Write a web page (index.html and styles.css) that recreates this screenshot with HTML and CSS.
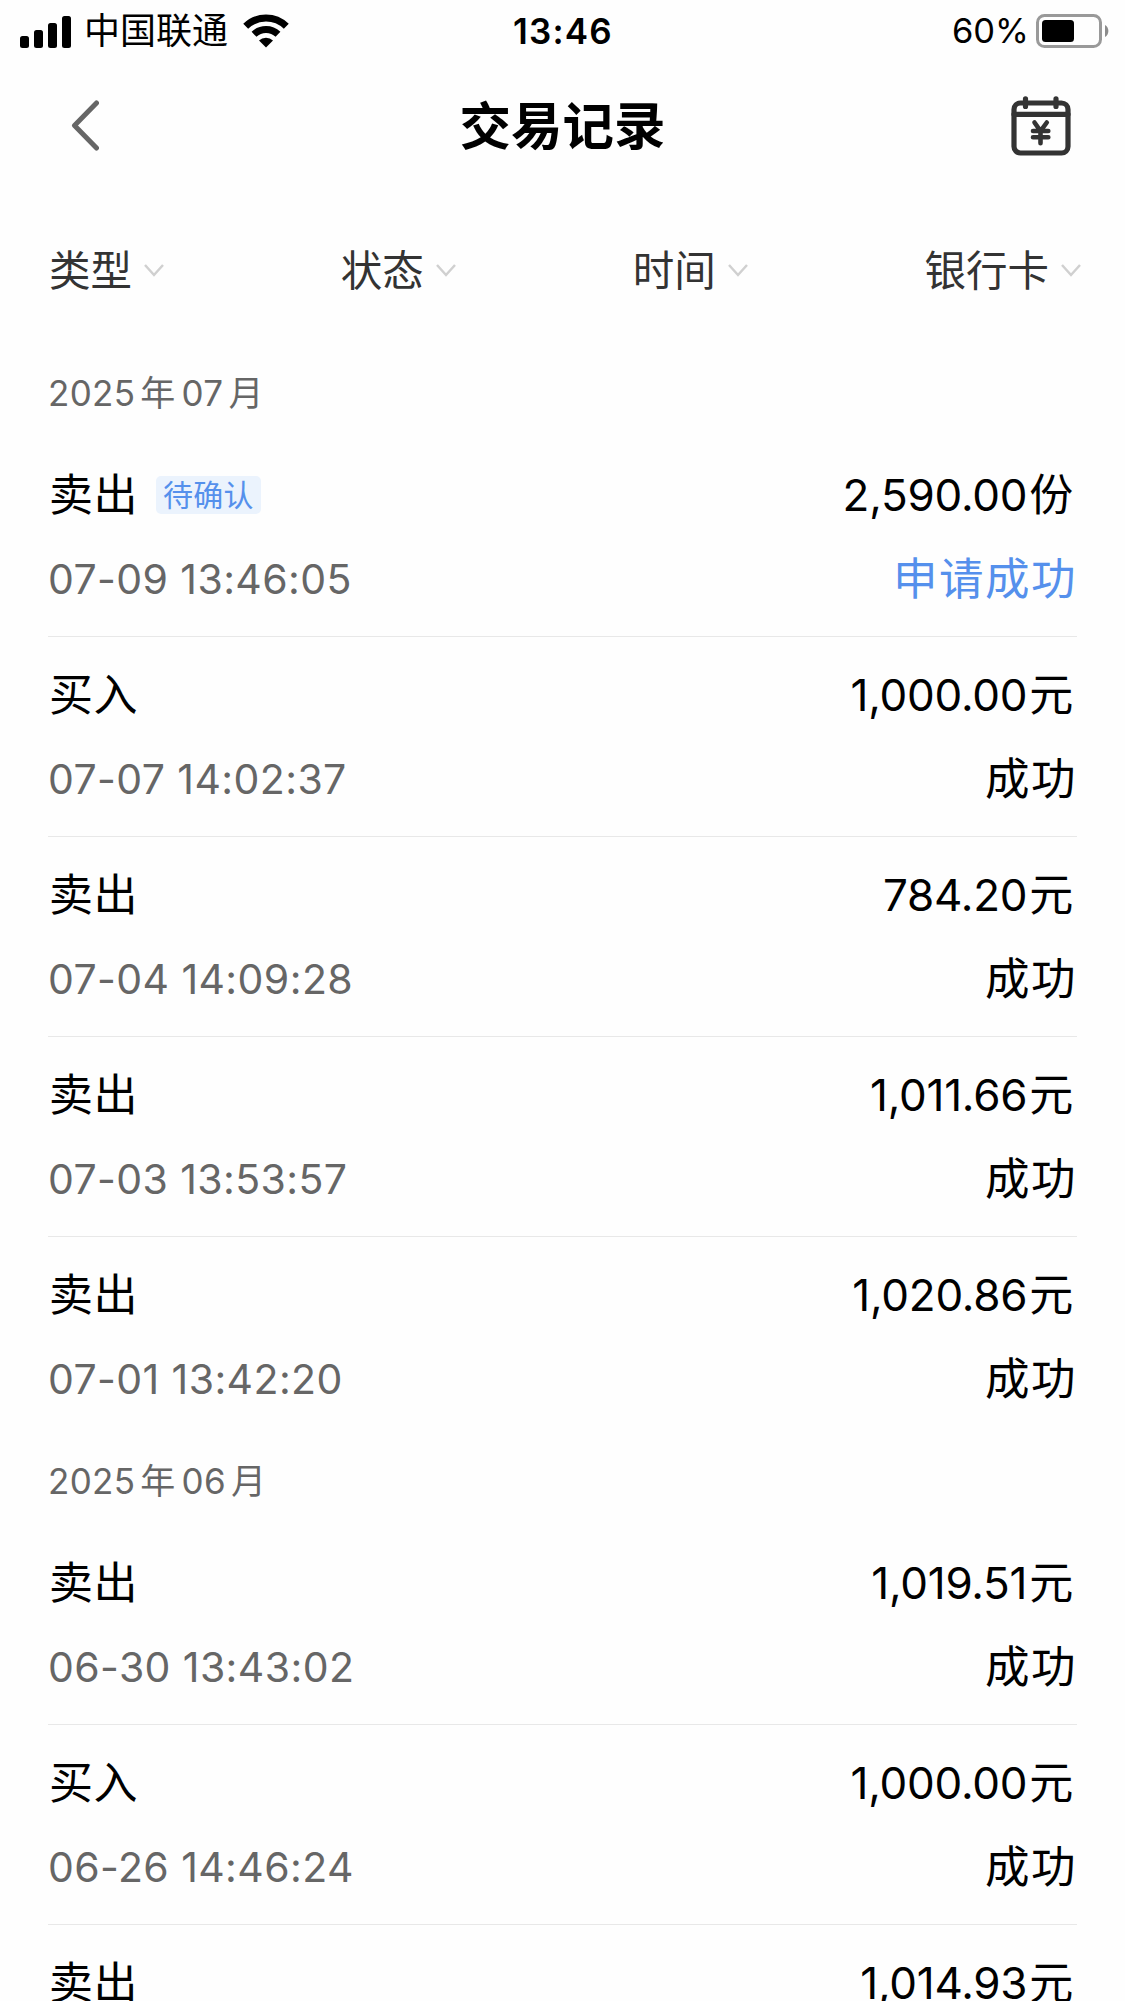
FILE: index.html
```html
<!DOCTYPE html>
<html lang="zh-CN">
<head>
    <meta charset="UTF-8">
    <title>交易记录</title>
    <link rel="stylesheet" href="styles.css">
</head>
<body>
    <div class="statusbar">
        <div class="status-left">
            <svg class="signal" width="52" height="33" viewBox="0 0 52 33">
                <rect x="0" y="21" width="9" height="12" rx="2.5"/>
                <rect x="14" y="15" width="9" height="18" rx="2.5"/>
                <rect x="28" y="8" width="9" height="25" rx="2.5"/>
                <rect x="42" y="1" width="9" height="32" rx="2.5"/>
            </svg>
            <span class="carrier">中国联通</span>
            <svg class="wifi" width="46" height="34" viewBox="0 0 46 34">
                <path d="M2.7 12.3 A29 29 0 0 1 43.3 12.3" fill="none" stroke="#000" stroke-width="7"/>
                <path d="M11 20.3 A17.5 17.5 0 0 1 35 20.3" fill="none" stroke="#000" stroke-width="7"/>
                <path d="M16 26.5 A10 10 0 0 1 30 26.5 L23 33.5 Z"/>
            </svg>
        </div>
        <span class="clock">13:46</span>
        <div class="status-right">
            <span class="percent">60%</span>
            <svg class="battery" width="74" height="34" viewBox="0 0 74 34">
                <rect x="1.5" y="1.5" width="63" height="31" rx="7" fill="none" stroke="#999" stroke-width="3"/>
                <rect x="6" y="6" width="32" height="22" rx="3.5"/>
                <path d="M69 11 A7 7 0 0 1 69 23 Z" fill="#8c8c8c"/>
            </svg>
        </div>
    </div>

    <div class="navbar">
        <svg class="back" width="28" height="52" viewBox="0 0 28 52">
            <path d="M25.5 3 L3.5 25.5 L25.5 48" fill="none" stroke="#666" stroke-width="5" stroke-linecap="round" stroke-linejoin="round"/>
        </svg>
        <h1>交易记录</h1>
        <svg class="calendar" width="60" height="60" viewBox="0 0 60 60">
            <g fill="none" stroke="#333" stroke-width="5.2" stroke-linecap="round">
                <rect x="3" y="7" width="54" height="50" rx="6.5"/>
                <path d="M3 18.3 H57 M14.5 2.8 V10.5 M45 2.8 V10.5"/>
                <path d="M23.5 26.5 L29.5 35 L35.8 26.5 M29.5 35 V47.3 M22 35 H37.3 M22 41.3 H37.3" stroke-width="4.6"/>
            </g>
        </svg>
    </div>

    <div class="filters">
        <div class="filter">类型<svg class="arrow" width="20" height="13" viewBox="0 0 20 13"><path d="M1 1 L10 11 L19 1"/></svg></div>
        <div class="filter">状态<svg class="arrow" width="20" height="13" viewBox="0 0 20 13"><path d="M1 1 L10 11 L19 1"/></svg></div>
        <div class="filter">时间<svg class="arrow" width="20" height="13" viewBox="0 0 20 13"><path d="M1 1 L10 11 L19 1"/></svg></div>
        <div class="filter">银行卡<svg class="arrow" width="20" height="13" viewBox="0 0 20 13"><path d="M1 1 L10 11 L19 1"/></svg></div>
    </div>

    <div class="records">
        <h2 class="month">2025<i>年</i>07<i>月</i></h2>
        <div class="record">
            <div class="line"><span class="type">卖出<span class="tag">待确认</span></span><span class="amount">2,590.00<i>份</i></span></div>
            <div class="line"><span class="time">07-09 13:46:05</span><span class="state pending">申请成功</span></div>
        </div>
        <div class="record">
            <div class="line"><span class="type">买入</span><span class="amount">1,000.00<i>元</i></span></div>
            <div class="line"><span class="time">07-07 14:02:37</span><span class="state">成功</span></div>
        </div>
        <div class="record">
            <div class="line"><span class="type">卖出</span><span class="amount">784.20<i>元</i></span></div>
            <div class="line"><span class="time">07-04 14:09:28</span><span class="state">成功</span></div>
        </div>
        <div class="record">
            <div class="line"><span class="type">卖出</span><span class="amount">1,011.66<i>元</i></span></div>
            <div class="line"><span class="time">07-03 13:53:57</span><span class="state">成功</span></div>
        </div>
        <div class="record last">
            <div class="line"><span class="type">卖出</span><span class="amount">1,020.86<i>元</i></span></div>
            <div class="line"><span class="time">07-01 13:42:20</span><span class="state">成功</span></div>
        </div>

        <h2 class="month">2025<i>年</i>06<i>月</i></h2>
        <div class="record">
            <div class="line"><span class="type">卖出</span><span class="amount">1,019.51<i>元</i></span></div>
            <div class="line"><span class="time">06-30 13:43:02</span><span class="state">成功</span></div>
        </div>
        <div class="record">
            <div class="line"><span class="type">买入</span><span class="amount">1,000.00<i>元</i></span></div>
            <div class="line"><span class="time">06-26 14:46:24</span><span class="state">成功</span></div>
        </div>
        <div class="record">
            <div class="line"><span class="type">卖出</span><span class="amount">1,014.93<i>元</i></span></div>
        </div>
    </div>
</body>
</html>
```
FILE: styles.css
```css
* { box-sizing: border-box; }
body { margin: 0; height: 2001px; overflow: hidden; background-color: #fefefe; color: #000; font-family: Inter, "Noto Sans CJK SC", sans-serif; }
h1, h2 { margin: 0; }
i { font-style: normal; }
svg { display: block; flex: none; }

.statusbar { display: grid; grid-template-columns: 1fr auto 1fr; align-items: center; height: 60px; padding: 0 15px 0 20px; }
.status-left, .status-right { display: flex; align-items: center; }
.status-right { justify-content: flex-end; }
.carrier { margin: 0 15px 0 12px; line-height: 56px; font-size: 36px; }
.clock { padding-right: 4px; line-height: 62px; font-size: 35px; font-weight: 600; letter-spacing: 1.2px; }
.percent { margin-right: 7px; line-height: 62px; font-size: 34.5px; }

.navbar { display: flex; align-items: center; height: 132px; padding: 0 54px 0 71px; }
.navbar h1 { flex: 1; padding-left: 15px; line-height: 131px; text-align: center; font-size: 51.5px; font-weight: 700; }

.filters { display: flex; justify-content: space-between; height: 157px; padding: 0 44px 0 49px; line-height: 158px; color: #333; font-size: 41.5px; }
.filter { display: flex; align-items: center; gap: 12px; }
.arrow path { fill: none; stroke: #d0d0d0; stroke-width: 2.5; }

.records { padding: 0 48px; }
.month { height: 88px; line-height: 88px; color: #666; font-size: 35px; font-weight: 400; letter-spacing: 0.3px; }
.month i { margin: 0 6px 0 5px; }
.record { height: 200px; padding: 16px 0; border-bottom: 1px solid #e8e8e8; }
.record.last { border-bottom-color: transparent; }
.line { display: flex; align-items: center; justify-content: space-between; height: 84px; line-height: 84px; white-space: nowrap; }
.type { display: flex; align-items: center; padding-left: 1px; font-size: 44px; letter-spacing: 0.5px; }
.tag { margin-left: 18px; padding: 0 7px; height: 38px; line-height: 39px; border-radius: 5px; background-color: #ebf3fd; color: #5590ec; font-size: 30px; letter-spacing: 0.2px; }
.amount { padding-right: 4px; line-height: 83px; font-size: 44px; letter-spacing: -0.25px; }
.amount i { margin-left: 2px; }
.time { line-height: 83px; color: #666; font-size: 41px; letter-spacing: 0.4px; }
.state { font-size: 44.5px; letter-spacing: 1.5px; }
.pending { color: #5590ec; }
```
